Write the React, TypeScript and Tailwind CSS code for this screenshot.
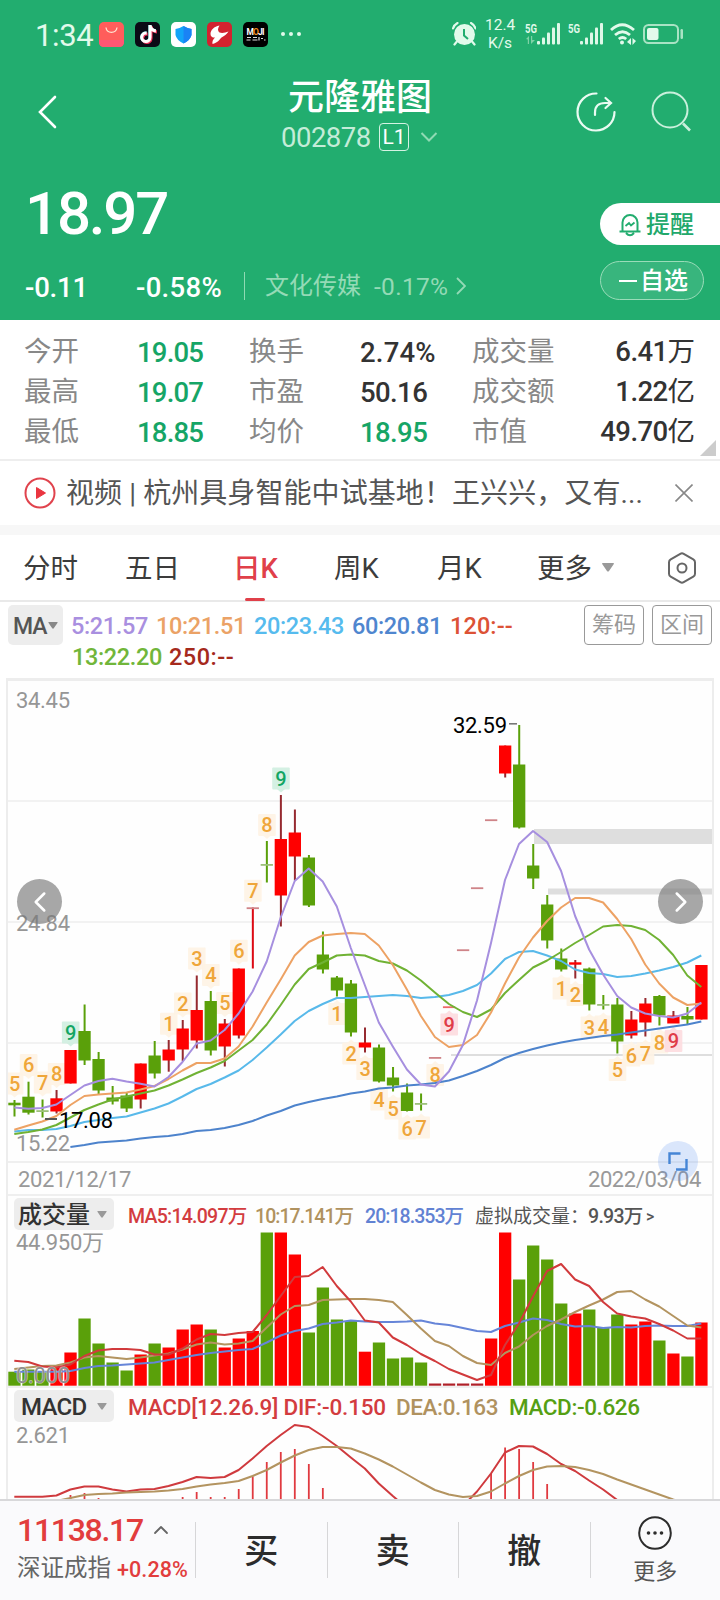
import { ChevronDown, ChevronLeft, ChevronRight, ChevronUp, X } from "lucide-react";
import { FaTiktok } from "react-icons/fa6";

const UP = "#ff0000";
const DOWN = "#5aa00a";
const STEP = 14.02;
const FIRST_X = 14.3;

const cx = (i: number) => FIRST_X + STEP * i;

// side, wick top, wick bottom, body top, body bottom
type Candle = ["u" | "d", number, number, number, number];

const candles: Candle[] = [
  ["d", 1100, 1116.5, 1102.7, 1105.3],
  ["d", 1081.7, 1114.5, 1096.7, 1112.7],
  ["d", 1099.5, 1117.5, 1110.2, 1111.4],
  ["u", 1090, 1113.5, 1098.3, 1111.5],
  ["u", 1050, 1083.5, 1050, 1083.5],
  ["d", 1004.5, 1065, 1031, 1060.5],
  ["d", 1052, 1094, 1059, 1090.5],
  ["d", 1086, 1104.5, 1097.5, 1101.5],
  ["d", 1093, 1112, 1095.5, 1108.5],
  ["u", 1063.5, 1108.5, 1063.5, 1099.5],
  ["d", 1041, 1078.5, 1055.5, 1073.5],
  ["u", 1040, 1071.7, 1049.5, 1060.5],
  ["u", 1020, 1061, 1028.5, 1049.5],
  ["u", 975.5, 1048.5, 1010, 1040.5],
  ["d", 991, 1055.5, 1001, 1050.5],
  ["u", 1019, 1066.5, 1023.5, 1046.5],
  ["u", 968.5, 1038.5, 968.5, 1035.5],
  ["u", 907.5, 968.5, 907.3, 908.5],
  ["d", 841, 882.5, 864, 865.4],
  ["u", 795, 926.5, 839, 895.5],
  ["u", 809.5, 880.5, 832.5, 856.5],
  ["d", 855, 907, 857.5, 905.5],
  ["d", 931.5, 973.5, 954.5, 969.5],
  ["d", 976, 996.5, 977.5, 990.5],
  ["d", 980, 1036.5, 983.5, 1032.5],
  ["u", 1027.5, 1052.5, 1042.5, 1047.5],
  ["d", 1044.5, 1082.5, 1047.5, 1081.5],
  ["d", 1067, 1091.5, 1077.5, 1085.5],
  ["d", 1083.5, 1111.5, 1092.5, 1111],
  ["d", 1093.5, 1110.5, 1103, 1104.4],
  ["u", 1057, 1058.4, 1057, 1058.4],
  ["u", 1006.3, 1007.7, 1006.3, 1007.7],
  ["u", 949.3, 950.7, 949.3, 950.7],
  ["u", 887.3, 888.7, 887.3, 888.7],
  ["u", 819.3, 820.7, 819.3, 820.7],
  ["u", 745.5, 777.5, 745.5, 773.5],
  ["d", 725, 828.5, 764.5, 827.5],
  ["d", 844, 889, 865.5, 878.5],
  ["d", 895, 948.5, 904.5, 940.5],
  ["d", 948.5, 971.5, 958.5, 969.5],
  ["u", 960, 978.5, 962.3, 964.7],
  ["d", 967.5, 1010.5, 968.5, 1004.5],
  ["d", 995, 1009.5, 1004, 1005.4],
  ["d", 998, 1053.5, 1004.5, 1041.5],
  ["u", 1011, 1038.5, 1019.5, 1035.5],
  ["u", 998, 1036.5, 1003.5, 1022.5],
  ["d", 995, 1025.5, 996, 1015.5],
  ["u", 1011, 1022, 1015.5, 1023.5],
  ["d", 1007, 1025, 1016, 1019.5],
  ["u", 965, 1019.5, 965, 1019.5],
];

const ma5 = [
  1107.5, 1108.7, 1108, 1104.5, 1095, 1085.5, 1081, 1078.7, 1081.5, 1083.7, 1086.5, 1077, 1062, 1043.5, 1040.5, 1030,
  1013.5, 991.5, 961.5, 917.5, 881, 868.5, 881.5, 906.5, 948, 985, 1022.5, 1046.5, 1069.5, 1084.5, 1086.5, 1071.5,
  1045, 1000.5, 943, 880, 844, 831, 842, 871, 916, 949.5, 974.5, 996, 1007.5, 1013.5, 1016, 1017.5, 1013.5, 1002.5,
];
const ma10 = [
  1129.7, 1125.5, 1121.5, 1116, 1105, 1096, 1094.5, 1093.5, 1092.5, 1089.5, 1086, 1079, 1070.5, 1063, 1063, 1058.5,
  1046.5, 1026.5, 1002.5, 979.5, 955.5, 942, 935.5, 934, 933, 934, 945.5, 965, 989.5, 1016, 1037, 1047, 1045, 1035,
  1012.5, 983.5, 957.5, 937.5, 921, 907.5, 898, 898, 902.5, 919, 939, 964.5, 983.5, 997.5, 1005, 1003.5,
];
const ma13 = [
  1134, 1132, 1129.5, 1125, 1117.5, 1110, 1104.5, 1099.5, 1096.5, 1093.5, 1090.5, 1085.5, 1079.5, 1073, 1067.5, 1061,
  1050.5, 1040, 1024.5, 1005, 984.5, 969, 962.5, 955.5, 954.5, 955.5, 961, 963.5, 970.5, 980.5, 992.5, 1004, 1012,
  1017, 1009.5, 993, 980, 967.5, 960.5, 952, 943, 935, 926.5, 925, 926, 930, 940, 955, 975.5, 987,
];
const ma20 = [
  1131.5, 1130, 1130, 1129, 1126, 1122, 1120, 1118, 1116.5, 1112.5, 1108.5, 1103.5, 1096.5, 1089, 1084, 1077.5,
  1070.5, 1060, 1047.5, 1034.5, 1021, 1011, 1004, 998, 998, 997, 996, 995, 996, 998, 997, 995, 991, 985, 973.5, 959,
  952, 951, 955.5, 961, 969.5, 973, 974, 977, 976, 973.5, 970.5, 967, 962.5, 955.5,
];
const ma60 = [
  1147, 1145, 1142.5, 1141.5, 1140.5, 1138.5, 1137, 1136, 1134, 1131, 1130, 1128, 1125, 1121, 1115.5, 1111, 1105.5,
  1102, 1099, 1096.5, 1093.5, 1091.5, 1088.5, 1087.5, 1085.5, 1084.5, 1083, 1080.5, 1076, 1071, 1065, 1058, 1053,
  1049, 1045.5, 1042.5, 1040, 1038, 1036, 1034.5, 1032.5, 1030.5, 1028.5, 1026.5, 1024.5, 1021.5,
];

const volumeTops = [
  1371.7, 1369.5, 1371, 1366.5, 1352.5, 1318.5, 1343.5, 1362.5, 1370.5, 1354.5, 1343.5, 1347.5, 1329.5, 1324.5, 1329.5,
  1347.5, 1338.5, 1331, 1232.5, 1232.5, 1254.5, 1332.5, 1287.5, 1319.5, 1321, 1351.7, 1342.5, 1358.5, 1357.5, 1362.5,
  1383.5, 1383.5, 1383.5, 1383.5, 1338.5, 1232.5, 1279.5, 1245.5, 1259.5, 1303.5, 1313.5, 1309.5, 1327.5, 1314.5,
  1324.5, 1321.5, 1340.5, 1353.5, 1356.5, 1322.5,
];
const vol5 = [
  1360.7, 1362, 1366.5, 1367.5, 1364.5, 1356, 1350.5, 1349, 1349, 1350, 1354.5, 1354.5, 1348.5, 1339.5, 1334, 1335,
  1333, 1332, 1315, 1296, 1277, 1276, 1267, 1286, 1301.5, 1320.5, 1322.5, 1337.5, 1345, 1354, 1361, 1369, 1374.5,
  1380, 1375, 1345, 1323.5, 1296.5, 1271, 1264, 1279.5, 1286, 1302, 1313.5, 1316.5, 1318.5, 1324, 1330.5, 1338.5,
  1338.5,
];
const vol10 = [
  1369, 1367.5, 1366, 1365.5, 1362.5, 1357.5, 1356, 1357.5, 1359, 1357.5, 1355.5, 1353.5, 1349.5, 1344.5, 1342.5,
  1344.5, 1343.5, 1341, 1327.5, 1314.5, 1306, 1305, 1300, 1299.5, 1299, 1299, 1300, 1302, 1315, 1328.5, 1341, 1346,
  1356, 1363, 1365, 1353, 1346.5, 1335, 1326, 1319.5, 1312, 1305.5, 1299.5, 1292, 1291, 1299.5, 1306.5, 1316, 1325.5,
  1327.5,
];
const vol20 = [
  1371.7, 1371.7, 1371.7, 1371.7, 1371, 1368, 1366, 1365.5, 1364.5, 1363.5, 1362.5, 1360, 1357.5, 1355, 1353, 1351.5,
  1350, 1349, 1342.5, 1335.5, 1331, 1328.5, 1324, 1322.5, 1320.5, 1321.5, 1322, 1322, 1321.5, 1320.5, 1323.5, 1325,
  1328, 1331, 1332, 1326, 1322.5, 1318.5, 1320, 1324, 1326.5, 1326, 1328, 1327, 1327.5, 1326, 1325.5, 1326, 1326,
  1323.5,
];

const dif = [
  1496.7, 1496.7, 1496.7, 1495.5, 1489.5, 1486.5, 1486.5, 1489.5, 1491.5, 1489.5, 1489, 1486, 1482, 1477, 1478, 1477,
  1470, 1458.5, 1446, 1435, 1425, 1427, 1436, 1446, 1457.5, 1468.5, 1483.5, 1496, 1508, 1516, 1520, 1516, 1506, 1491.5,
  1473.5, 1452.5, 1446, 1446.5, 1454, 1464, 1471, 1480.5, 1489.5, 1500, 1510,
];
const dea = [
  1501, 1498, 1495, 1494, 1493.5, 1492.5, 1492, 1491.5, 1490.5, 1489, 1486.5, 1484.5, 1483, 1481, 1476, 1470, 1462.5,
  1455.5, 1450, 1447, 1447, 1448.5, 1453.5, 1459.5, 1466.5, 1474.5, 1482.5, 1490, 1494.5, 1497, 1496, 1491.5, 1483.5,
  1476, 1470, 1466.5, 1466, 1467, 1470, 1474, 1479.5, 1484.5, 1489.5, 1494.5, 1499.5, 1504,
];
const macdBars: [number, number][] = [
  [4, 1495], [5, 1493], [6, 1498], [12, 1497], [13, 1492], [14, 1497], [15, 1497], [16, 1489], [17, 1476.5],
  [18, 1462], [19, 1452], [20, 1449], [21, 1464], [22, 1488], [34, 1473.5], [35, 1447.5], [36, 1449], [37, 1462],
  [38, 1484],
];

// candle index, digit, centre y, side of the candle
const counts: [number, number, number, "above" | "below"][] = [
  [0, 5, 1083.5, "above"], [1, 6, 1065, "above"], [2, 7, 1082.5, "above"], [3, 8, 1074, "above"],
  [4, 9, 1032.5, "above"], [11, 1, 1023.7, "above"], [12, 2, 1003.5, "above"], [13, 3, 958.5, "above"],
  [14, 4, 975, "above"], [15, 5, 1003, "above"], [16, 6, 950.8, "above"], [17, 7, 890.8, "above"],
  [18, 8, 825, "above"], [19, 9, 778.5, "above"], [23, 1, 1014, "below"], [24, 2, 1053.5, "below"],
  [25, 3, 1069, "below"], [26, 4, 1099.5, "below"], [27, 5, 1108.5, "below"], [28, 6, 1128.5, "below"],
  [29, 7, 1127.5, "below"], [30, 8, 1075, "below"], [31, 9, 1024.5, "below"], [39, 1, 988.5, "below"],
  [40, 2, 995, "below"], [41, 3, 1027.5, "below"], [42, 4, 1026.5, "below"], [43, 5, 1070, "below"],
  [44, 6, 1055.5, "below"], [45, 7, 1053.5, "below"], [46, 8, 1042.5, "below"], [47, 9, 1041, "below"],
];

const line = (ys: number[], start = 0) => ys.map((y, i) => `${cx(i + start).toFixed(1)},${y}`).join(" ");

function Line({ ys, start = 0, color }: { ys: number[]; start?: number; color: string }) {
  return <polyline points={line(ys, start)} fill="none" stroke={color} strokeWidth={2} strokeLinejoin="round" />;
}

function CandleBar({ candle, i }: { candle: Candle; i: number }) {
  const [side, high, low, top, bottom] = candle;
  const thin = bottom - top < 2;
  const x = cx(i);
  const body = side === "d" ? DOWN : UP;
  const wick = side === "d" ? DOWN : i === 17 ? "#dc0a14" : "#962a30";
  const dash = side === "d" ? "#9cc07a" : i === 31 ? "#ee6a6a" : "#cf8488";
  return (
    <g>
      {low - high > 2 && <rect x={x - 0.8} y={high} width={2} height={low - high} fill={wick} />}
      <rect x={x - 6} y={top} width={12.3} height={thin ? 1.8 : bottom - top} fill={thin ? dash : body} />
    </g>
  );
}

function CountTag({ i, n, y, side }: { i: number; n: number; y: number; side: "above" | "below" }) {
  const x = cx(i) + 0.3;
  const tone =
    n !== 9
      ? { bg: "#fef3e4", fg: "#efa63a" }
      : side === "above"
        ? { bg: "#cfeee0", fg: "#12a563" }
        : { bg: "#fddcdf", fg: "#e03c48" };
  const tip =
    side === "above" ? `M${x - 4} ${y + 10.5}h8l-4 3.5z` : `M${x - 4} ${y - 10.5}h8l-4 -3.5z`;
  return (
    <g>
      <rect x={x - 8.8} y={y - 11} width={17.6} height={22} rx={1} fill={tone.bg} fillOpacity={0.9} />
      <path d={tip} fill={tone.bg} fillOpacity={0.9} />
      <text x={x} y={y + 7.2} textAnchor="middle" fontSize={20} fontWeight={500} fill={tone.fg}>
        {n}
      </text>
    </g>
  );
}

function AxisText({ x, y, w, children, fill = "#969696" }: { x: number; y: number; w: number; children: string; fill?: string }) {
  return (
    <text x={x} y={y} fontSize={22} fill={fill} textLength={w}>
      {children}
    </text>
  );
}

function PriceChart() {
  return (
    <svg viewBox="8 681 704 480" className="block h-[480px] w-[704px]">
      <g fill="#f2f2f2">
        <rect x="8" y="800" width="704" height="2" />
        <rect x="8" y="921" width="704" height="2" />
        <rect x="8" y="1042" width="704" height="2" />
      </g>
      <AxisText x={16} y={708} w={54}>34.45</AxisText>
      <AxisText x={16} y={931} w={54}>24.84</AxisText>
      <AxisText x={16} y={1151} w={54}>15.22</AxisText>
      <g fill="#dedede">
        <rect x="534" y="829" width="178" height="15" />
        <rect x="548" y="888.5" width="164" height="6" />
        <rect x="451" y="1054" width="261" height="2" />
      </g>
      {counts.map(([i, n, y, side]) => (
        <CountTag key={i} i={i} n={n} y={y} side={side} />
      ))}
      {candles.map((c, i) => (
        <CandleBar key={i} candle={c} i={i} />
      ))}
      <Line ys={ma60} start={4} color="#4d83cc" />
      <Line ys={ma20} color="#58b9ea" />
      <Line ys={ma13} color="#70b234" />
      <Line ys={ma10} color="#eda264" />
      <Line ys={ma5} color="#a68fdf" />
      <rect x="45" y="1118" width="12" height="2" fill="#555" />
      <AxisText x={59} y={1128} w={54} fill="#000">17.08</AxisText>
      <AxisText x={453} y={733} w={54} fill="#000">32.59</AxisText>
      <rect x="509" y="723" width="8" height="1.6" fill="#777" />
    </svg>
  );
}

function VolumeChart() {
  return (
    <svg viewBox="8 1232 704 154" className="block h-[154px] w-[704px] overflow-visible">
      {volumeTops.map((top, i) => {
        const flat = i >= 30 && i <= 33;
        const fill = flat ? "#b02028" : candles[i][0] === "u" ? UP : DOWN;
        return <rect key={i} x={cx(i) - 6} y={top} width={12.3} height={1385.7 - top} fill={fill} />;
      })}
      <AxisText x={16} y={1250} w={88}>44.950万</AxisText>
      <Line ys={vol20} color="#6685d8" />
      <Line ys={vol10} color="#b39460" />
      <Line ys={vol5} color="#d13a3c" />
      <text x="16" y="1383" fontSize="22" textLength="54" fill="#8f8f8f" stroke="#fff" strokeWidth="1.2" strokeOpacity=".6" paintOrder="stroke">
        0.000
      </text>
    </svg>
  );
}

function MacdChart() {
  return (
    <svg viewBox="8 1424 704 75" className="block h-[75px] w-[704px]">
      <AxisText x={16} y={1443} w={54}>2.621</AxisText>
      {macdBars.map(([i, top]) => (
        <rect key={i} x={cx(i) - 0.8} y={top} width={1.8} height={1500 - top} fill="#e03a40" />
      ))}
      <Line ys={dif} color="#cf3a3e" />
      <Line ys={dea} start={3} color="#b39460" />
    </svg>
  );
}

function Caret({ className }: { className?: string }) {
  return (
    <svg viewBox="0 0 10 7" className={className}>
      <path d="M1 0h8q1.200 0 .4 1L5.800 6.200q-.8.900-1.600 0L.6 1Q-.2 0 1 0z" fill="currentColor" />
    </svg>
  );
}

function Signal({ arrows }: { arrows?: boolean }) {
  return (
    <svg viewBox="0 0 36 24" className="h-6 w-9" fill="#dff8e8">
      <text x="0" y="10.500" fontSize="13.500" fontWeight="700" textLength="12" lengthAdjust="spacingAndGlyphs">
        5G
      </text>
      {arrows && <path d="M1 17l3-3v8H2.800v-4.500zM6 14v8l4-4H7.200v-4z" fill="#7fd2a6" />}
      <rect x="12" y="19" width="3" height="3.600" rx="1" />
      <rect x="17" y="15.500" width="3" height="7.100" rx="1" />
      <rect x="22" y="10.500" width="3" height="12.100" rx="1" />
      <rect x="27" y="5.500" width="3" height="17.100" rx="1" />
      <rect x="32" y="1" width="3" height="21.600" rx="1" />
    </svg>
  );
}

function StatusBar() {
  return (
    <div className="flex h-[68px] items-center pl-[35px] text-[#e2faeb]">
      <span className="w-[64px] pt-[2px] text-[31px] tracking-[-0.4px]">1:34</span>
      <div className="flex gap-[11px]">
        <svg viewBox="0 0 25 25" className="size-[25px]">
          <rect width="25" height="25" rx="5" fill="#ff5d5b" />
          <path d="M0 18h25v2q0 5-5 5H5q-5 0-5-5z" fill="#ff5674" />
          <path d="M7 5.500c.8 6.500 10 6.500 11 0" fill="none" stroke="#ffe2cf" strokeWidth="1.300" />
        </svg>
        <div className="relative size-[25px] rounded-[5px] bg-[#0b0b16]">
          <FaTiktok className="absolute left-[3.5px] top-[3px] size-[18px] text-[#2ee6e2]" />
          <FaTiktok className="absolute left-[5px] top-[4.5px] size-[18px] text-[#f2335b]" />
          <FaTiktok className="absolute left-[4.2px] top-[3.7px] size-[18px] text-white" />
        </div>
        <svg viewBox="0 0 25 25" className="size-[25px]">
          <rect width="25" height="25" rx="5" fill="#fff" />
          <path d="M12.500 4q4 2.500 8 3v6q-1 5-8 8.500Q5.500 18 4.500 13V7q4-.5 8-3z" fill="#12a4f8" />
          <path d="M12.500 4q4 2.500 8 3v6q-1 5-8 8.500z" fill="#1a83f5" />
        </svg>
        <svg viewBox="0 0 25 25" className="size-[25px]">
          <rect width="25" height="25" rx="5" fill="#d3222f" />
          <path d="M12.500 3.500C7 4.500 3.500 8 3.500 12c0 3 3 4 4.500 3.500-2 2-3 4-2.500 6.500 5-1 7-4.500 9-6.500 3-1.500 5-3 7-6-3 1-6 2-9 1-2-1.500-2-4 0-7z" fill="#fff" />
        </svg>
        <svg viewBox="0 0 25 25" className="size-[25px]">
          <rect width="25" height="25" rx="5" fill="#000" />
          <text x="3.500" y="13" fontSize="8.500" fontWeight="700" fill="#fff" textLength="18">
            M<tspan fill="#f08a1c">O</tspan>JI
          </text>
          <path d="M4 15.500h4M3.500 18h4M10 15.500h4M9.500 18h5M16 15v3.500M18 16.500h2M21 18h1.500" stroke="#ddd" strokeWidth="1.200" />
        </svg>
      </div>
      <div className="ml-[13px] flex gap-[4px]">
        <span className="size-[4px] rounded-full bg-current" />
        <span className="size-[4px] rounded-full bg-current" />
        <span className="size-[4px] rounded-full bg-current" />
      </div>
      <svg viewBox="0 0 24 24" className="ml-[151px] h-6 w-6" fill="#e2faeb">
        <circle cx="12.500" cy="12.500" r="10.500" />
        <path d="M1 6.500q1-3.500 4.500-5.500M19 1q3.500 2 4.500 5.500M4.500 20l-2 2.500M20.500 20l2 2.500" stroke="#e2faeb" strokeWidth="2.200" fill="none" strokeLinecap="round" />
        <path d="M12 7v6.500l4 3.500" stroke="#22ad6f" strokeWidth="2" fill="none" />
      </svg>
      <div className="ml-[9px] w-[30px] text-center text-[15.5px] leading-[18px]">
        <div>12.4</div>
        <div>K/s</div>
      </div>
      <div className="ml-[10px] flex gap-[7px]">
        <Signal arrows />
        <Signal />
      </div>
      <svg viewBox="0 0 28 24" className="ml-[5px] h-6 w-7" fill="none" stroke="#e2faeb">
        <path d="M2 8q11-10.500 23 0M6 13q7.500-6.500 15 0M9.800 17q3.700-3 7.400 0" strokeWidth="2.800" />
        <circle cx="13" cy="20.500" r="2" fill="#e2faeb" stroke="none" />
        <path d="M18 20l4-4v7zM23.500 16v7l3.500-4z" fill="#e2faeb" stroke="none" />
      </svg>
      <svg viewBox="0 0 42 22" className="ml-[6px] h-[22px] w-[42px]">
        <rect x="1" y="2" width="34" height="18" rx="4.500" fill="none" stroke="#a9e3c4" strokeWidth="2" />
        <rect x="4" y="5" width="11.500" height="12" rx="2" fill="#e2faeb" />
        <rect x="37.500" y="6" width="2.500" height="10" rx="1.200" fill="#a9e3c4" />
      </svg>
    </div>
  );
}

function NavBar() {
  return (
    <div className="flex h-[97px] justify-between">
      <svg viewBox="0 0 20 34" className="ml-[37px] mt-[27px] h-[34px] w-5" fill="none" stroke="#fff" strokeWidth="2.600">
        <path d="M18 2L3 17l15 15" strokeLinecap="round" />
      </svg>
      <div className="ml-[88px] flex w-[240px] flex-col items-center pt-[9px] text-white">
        <h1 className="text-[36px] font-medium leading-[42px]">元隆雅图</h1>
        <div className="flex h-[36px] w-[158px] items-center">
          <span className="w-[98px] pt-[2px] text-[27.5px] tracking-[-0.5px] text-[#c4ecd8]">002878</span>
          <span className="flex h-[28px] w-[30px] items-center justify-center rounded-[4px] border border-[#d5f3e3] text-[21px]">
            L1
          </span>
          <svg viewBox="0 0 18 10" className="ml-[11px] h-[10px] w-[18px] shrink-0" fill="none" stroke="#8fdab3" strokeWidth="2">
            <path d="M1.500 1L9 8.500 16.500 1" />
          </svg>
        </div>
      </div>
      <div className="flex pt-[23px]">
        <svg viewBox="0 0 42 42" className="h-[42px] w-[42px]" fill="none" stroke="#eafbf2" strokeWidth="2.200" strokeLinecap="round">
          <path d="M21.500 2.500A18.500 18.500 0 1 0 39.500 21" />
          <path d="M20 24v-2.500q0-9.500 10-9.500h5.500M30.500 7l5.500 5-5.500 5" />
        </svg>
        <svg viewBox="0 0 42 42" className="ml-[33px] mr-[28px] h-[42px] w-[42px]" fill="none" stroke="#c9f0dc" strokeWidth="2">
          <circle cx="20" cy="19" r="17.500" />
          <path d="M33 32.500l7 7" strokeWidth="2.600" />
        </svg>
      </div>
    </div>
  );
}

function QuoteHeader() {
  return (
    <div className="flex h-[155px] justify-between text-white">
      <div>
        <div className="flex h-[96px] items-center pl-[25px] pt-[2px] text-[60px] font-medium tracking-[-2.2px]">18.97</div>
        <div className="flex h-[50px] items-center pl-[25px] text-[27.5px] font-medium">
          <span className="w-[111px] pt-[3px] tracking-[-0.2px]">-0.11</span>
          <span className="w-[108px] pt-[3px] tracking-[0.3px]">-0.58%</span>
          <span className="h-[28px] w-px bg-[#8fdab3]" />
          <span className="ml-[20px] w-[109px] text-[24px] font-normal text-[#94dab6]">文化传媒</span>
          <span className="w-[82px] pt-[2px] text-[24.5px] font-normal tracking-[0.3px] text-[#94dab6]">-0.17%</span>
          <svg viewBox="0 0 10 18" className="h-[18px] w-[10px]" fill="none" stroke="#94dab6" strokeWidth="1.800">
            <path d="M1 1l8 8-8 8" />
          </svg>
        </div>
      </div>
      <div className="flex w-[120px] flex-col pt-[38px] text-[24px]">
        <button className="flex h-[42px] items-center rounded-l-full bg-white pl-[18px] font-medium text-[#22a86b]">
          <svg viewBox="0 0 24 25" className="h-[25px] w-6" fill="none" stroke="#22ad6f" strokeWidth="2">
            <path d="M4.500 19V10.500a7.500 7.500 0 0 1 15 0V19M1.500 19.500h21M8 21q4 4.500 8 0" />
            <path d="M7.500 14l3.500-3 2 2.500 3.500-3" strokeWidth="1.800" />
          </svg>
          <span className="ml-[4px] pt-px">提醒</span>
        </button>
        <button className="mt-[16px] flex h-[39px] w-[104px] items-center rounded-full border border-[#9adcb9] bg-white/10 pl-[18px] font-medium">
          <span className="h-[2px] w-[18px] bg-white" />
          <span className="ml-[3px] pt-px">自选</span>
        </button>
      </div>
    </div>
  );
}

const stats = [
  ["今开", "19.05", "换手", "2.74%", "成交量", "6.41", "万"],
  ["最高", "19.07", "市盈", "50.16", "成交额", "1.22", "亿"],
  ["最低", "18.85", "均价", "18.95", "市值", "49.70", "亿"],
];

function StatsGrid() {
  return (
    <div className="relative h-[141px] border-b-2 border-[#eeeeee] pt-[12px] text-[27.5px] text-[#333]">
      {stats.map((row, r) => (
        <div key={row[0]} className="flex h-[40px] items-center pl-[24px] pr-[25px]">
          <span className="w-[113px] text-[#888]">{row[0]}</span>
          <span className="w-[112px] pt-px font-medium tracking-[-0.8px] text-[#16a566]">{row[1]}</span>
          <span className="w-[111px] text-[#888]">{row[2]}</span>
          <span
            className={
              r === 2
                ? "w-[112px] pt-px font-medium tracking-[-0.6px] text-[#16a566]"
                : r === 0
                  ? "w-[112px] pt-px font-medium tracking-[0.2px]"
                  : "w-[112px] pt-px font-medium tracking-[-0.6px]"
            }
          >
            {row[3]}
          </span>
          <span className="text-[#888]">{row[4]}</span>
          <span className="ml-auto">
            <span className="font-medium tracking-[-0.6px]">{row[5]}</span>
            {row[6]}
          </span>
        </div>
      ))}
      <svg viewBox="0 0 16 16" className="absolute bottom-[3px] right-[4px] size-4">
        <path d="M16 0v16H0z" fill="#ccc" />
      </svg>
    </div>
  );
}

function NewsBar() {
  return (
    <div className="flex h-[64px] items-center pl-[24px] pr-[22px]">
      <svg viewBox="0 0 32 32" className="size-8">
        <circle cx="16" cy="16" r="14.500" fill="none" stroke="#e0434d" strokeWidth="2" />
        <path d="M12.500 10.500v11l9-5.500z" fill="#ea3540" stroke="#ea3540" strokeWidth="1" strokeLinejoin="round" />
      </svg>
      <p className="ml-[10px] whitespace-nowrap pt-[2px] text-[28px] tracking-[0.08px] text-[#555]">
        视频 | 杭州具身智能中试基地！王兴兴，又有...
      </p>
      <svg viewBox="0 0 18 18" className="ml-auto mr-[5px] size-[18px]" stroke="#888" strokeWidth="1.600">
        <path d="M.5.500l17 17M17.500.500l-17 17" />
      </svg>
    </div>
  );
}

function PeriodTabs() {
  return (
    <div className="flex h-[67px] items-center border-b-2 border-[#e9e9e9] pl-[23px] text-[27.5px] text-[#3c3c3c]">
      <span className="w-[102px] pt-[3px]">分时</span>
      <span className="w-[108px] pt-[3px]">五日</span>
      <span className="relative flex h-full w-[101px] items-center pt-[3px] font-medium text-[#e0404a]">
        日K
        <i className="absolute bottom-[-1px] left-[12px] h-[3px] w-[20px] rounded-sm bg-[#e0404a]" />
      </span>
      <span className="w-[103px] pt-[3px]">周K</span>
      <span className="w-[100px] pt-[3px]">月K</span>
      <span className="w-[64px] pt-[3px]">更多</span>
      <Caret className="h-[9px] w-[14px] text-[#999]" />
      <svg viewBox="0 0 30 32" className="ml-[52px] h-8 w-[30px]" fill="none" stroke="#666" strokeWidth="2">
        <path d="M13.300 1.800q1.700-1 3.400 0l9.600 5.500q1.700 1 1.700 3v11.400q0 2-1.700 3l-9.600 5.500q-1.700 1-3.400 0l-9.600-5.500q-1.700-1-1.700-3V10.300q0-2 1.700-3z" />
        <circle cx="15" cy="16" r="4.500" />
      </svg>
    </div>
  );
}

function MaLegend() {
  return (
    <div className="flex h-[76px] pl-[8px] pr-[8px] pt-[3px]">
      <button className="flex h-[40px] w-[55px] items-center rounded-[5px] bg-[#ededed] pl-[5px] text-[23px] font-medium text-[#555]">
        <span className="pt-[2px] tracking-[-1px]">MA</span>
        <Caret className="ml-px h-[7px] w-[10px] text-[#888]" />
      </button>
      <div className="ml-[8px] text-[23.5px] font-medium leading-[31px] tracking-[-0.35px]">
        <div className="flex pt-[6px]">
          <span className="w-[85px] text-[#a98fe0]">5:21.57</span>
          <span className="w-[98px] text-[#eba266]">10:21.51</span>
          <span className="w-[98px] text-[#56bbee]">20:23.43</span>
          <span className="w-[98px] text-[#4f86cf]">60:20.81</span>
          <span className="tracking-[0.1px] text-[#dc5236]">120:--</span>
        </div>
        <div className="flex pl-px">
          <span className="w-[97px] text-[#71b63a]">13:22.20</span>
          <span className="tracking-[0.5px] text-[#a52a1c]">250:--</span>
        </div>
      </div>
      <div className="ml-auto flex gap-[8px] text-[22px] text-[#999]">
        <button className="flex h-[40px] w-[60px] items-center justify-center rounded-[4px] border border-[#999]">筹码</button>
        <button className="flex h-[40px] w-[60px] items-center justify-center rounded-[4px] border border-[#999]">区间</button>
      </div>
    </div>
  );
}

function ChartPanel() {
  return (
    <div className="relative mx-[6px] border-x-2 border-t-[3px] border-[#ededed] bg-[#fefefe]">
      <PriceChart />
      <div className="flex h-[35px] items-center justify-between border-y-2 border-[#efefef] pl-[10px] pr-[11px] pt-[3px] text-[22px] tracking-[-0.4px] text-[#999]">
        <span>2021/12/17</span>
        <span>2022/03/04</span>
      </div>
      <div className="flex h-[36px] items-center whitespace-nowrap pl-[6px] text-[19.5px] font-medium tracking-[-0.5px]">
        <button className="flex h-[32px] w-[100px] items-center rounded-[5px] bg-[#ededed] pl-[4px] pt-px text-[24px] tracking-[0px] text-[#333]">
          成交量
          <Caret className="ml-[7px] h-[7px] w-[10px] text-[#999]" />
        </button>
        <span className="ml-[14px] w-[127px] pt-[5px] tracking-[-0.75px] text-[#d33c3f]">MA5:14.097万</span>
        <span className="w-[110px] pt-[5px] tracking-[-0.95px] text-[#b0925f]">10:17.141万</span>
        <span className="w-[110px] pt-[5px] tracking-[-0.95px] text-[#6182d3]">20:18.353万</span>
        <span className="w-[113px] pt-[5px] text-[19px] font-normal tracking-[0px] text-[#555]">虚拟成交量：</span>
        <span className="w-[58px] pt-[5px] tracking-[-0.7px] text-[#555]">9.93万</span>
        <span className="pt-[5px] text-[16px] text-[#555]">&gt;</span>
      </div>
      <VolumeChart />
      <div className="h-[2px] bg-[#efefef]" />
      <div className="flex h-[36px] items-center whitespace-nowrap pl-[6px] text-[22.5px] font-medium">
        <button className="flex h-[32px] w-[100px] items-center rounded-[5px] bg-[#ededed] pl-[7px] text-[24px] text-[#333]">
          <span className="w-[76px] pt-[2px] text-left tracking-[-0.7px]">MACD</span>
          <Caret className="h-[7px] w-[10px] text-[#999]" />
        </button>
        <span className="ml-[14px] w-[268px] pt-[3px] tracking-[-0.2px] text-[#d33c3f]">MACD[12.26.9] DIF:-0.150</span>
        <span className="w-[113px] pt-[3px] tracking-[-0.4px] text-[#b0925f]">DEA:0.163</span>
        <span className="pt-[3px] tracking-[-0.4px] text-[#559f14]">MACD:-0.626</span>
      </div>
      <MacdChart />
      <button className="absolute left-[9px] top-[198px] flex size-[45px] items-center justify-center rounded-full bg-[#787878]/65 text-white">
        <ChevronLeft className="size-[34px]" strokeWidth={1.8} />
      </button>
      <button className="absolute right-[9px] top-[198px] flex size-[45px] items-center justify-center rounded-full bg-[#787878]/65 text-white">
        <ChevronRight className="size-[34px]" strokeWidth={1.8} />
      </button>
      <button className="absolute right-[14px] top-[460px] size-[40px] rounded-full bg-[#4a86f0]/20">
        <svg viewBox="0 0 40 40" fill="none" stroke="#4585d6" strokeWidth="2.400">
          <path d="M11.500 23V12.500H22.500M18 28.500h10.500V18" />
        </svg>
      </button>
    </div>
  );
}

function TradeBar() {
  return (
    <div className="flex h-[101px] border-t-2 border-[#d8d8da] bg-[#fafafc] pt-[21px]">
      <div className="w-[195px] pl-[17px]">
        <div className="mt-[-10px] flex h-[36px] items-center text-[32px] font-medium tracking-[-1.3px] text-[#e23d3d]">
          11138.17
          <ChevronUp className="ml-[6px] size-[24px] text-[#666]" strokeWidth={1.8} />
        </div>
        <div className="mt-[3px] flex h-[36px] items-center text-[23.5px] text-[#666]">
          <span className="w-[100px]">深证成指</span>
          <span className="pt-[2px] text-[21.5px] font-medium tracking-[0.1px] text-[#e23d3d]">+0.28%</span>
        </div>
      </div>
      {["买", "卖", "撤"].map((label) => (
        <button
          key={label}
          className="flex h-[56px] w-[131.5px] items-center justify-center border-l border-[#d6d6d8] pt-px text-[34px] font-medium text-[#2c2c2c]"
        >
          {label}
        </button>
      ))}
      <div className="flex h-[56px] flex-1 flex-col items-center border-l border-[#d6d6d8] text-[22px] text-[#555]">
        <svg viewBox="0 0 36 36" className="mt-[-7px] size-9 shrink-0" fill="#2c2c2c">
          <circle cx="18" cy="18" r="15.800" fill="none" stroke="#2c2c2c" strokeWidth="2" />
          <circle cx="11.500" cy="18" r="1.800" />
          <circle cx="18" cy="18" r="1.800" />
          <circle cx="24.500" cy="18" r="1.800" />
        </svg>
        <span className="mt-[6px] leading-[30px]">更多</span>
      </div>
    </div>
  );
}

export default function App() {
  return (
    <div className="h-[1600px] w-[720px] overflow-hidden bg-white font-['Roboto','Noto_Sans_CJK_SC',sans-serif] leading-none">
      <header className="bg-[#22ad6f]">
        <StatusBar />
        <NavBar />
        <QuoteHeader />
      </header>
      <StatsGrid />
      <NewsBar />
      <div className="h-[10px] bg-[#f7f7f7]" />
      <PeriodTabs />
      <MaLegend />
      <ChartPanel />
      <TradeBar />
    </div>
  );
}
